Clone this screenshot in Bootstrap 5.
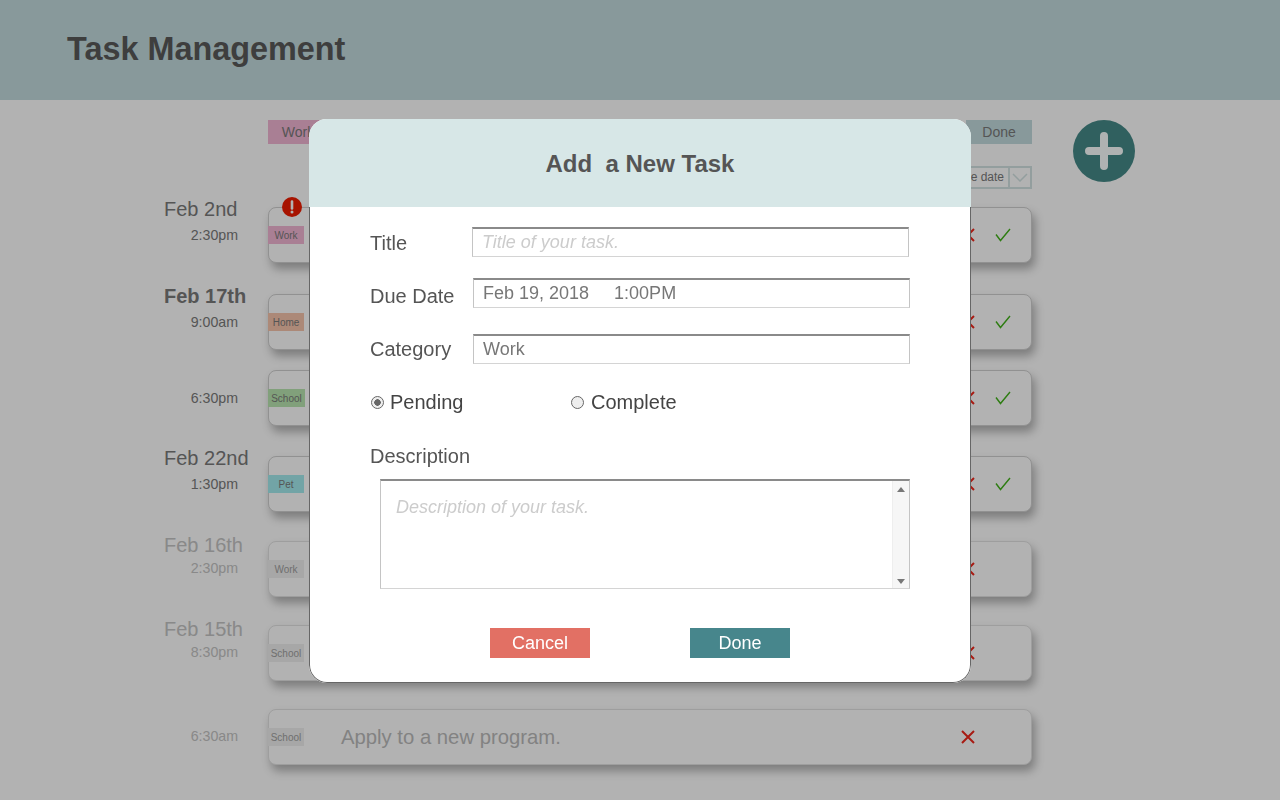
<!DOCTYPE html>
<html lang="en">
  <head>
    <meta charset="UTF-8" />
    <title>Task Management</title>
    <link href="https://cdn.jsdelivr.net/npm/bootstrap@5.3.0/dist/css/bootstrap.min.css" rel="stylesheet" />
    <style>
      body {
        font-family: "Liberation Sans", Arial, sans-serif;
        color: #7a7a7a;
        background-color: #fff;
      }
      .app-header {
        height: 100px;
        padding-left: 67px;
        background-color: #c3dcdf;
      }
      .app-header h1 {
        font-size: 32.4px;
        font-weight: 700;
        color: #595959;
        margin: 0 0 2px;
      }
      .board {
        padding: 20px 0 35px 164px;
      }
      .board-col {
        width: 868px;
      }
      .filter-bar {
        padding-left: 104px;
      }
      .filter-tab {
        width: 66px;
        height: 24px;
        font-size: 14px;
        line-height: 24px;
        text-align: center;
        color: #7a7a7a;
      }
      .filter-tab.cat-work { width: 60px; }
      .sort-box {
        width: 90px;
        height: 23px;
        margin-top: 22px;
        border: 2px solid #d3e3e3;
        font-size: 12px;
        line-height: 19px;
      }
      .sort-arrow {
        width: 22px;
        border-left: 2px solid #d3e3e3;
      }
      .cat-work { background-color: #f3b6d4; }
      .cat-home { background-color: #f7c5ad; }
      .cat-school { background-color: #b9e6b0; }
      .cat-pet { background-color: #a4ebee; }
      .cat-done { background-color: #c3dcdf; }
      .task-row { display: flex; }
      .gap-20 { margin-top: 20px; }
      .gap-28 { margin-top: 28px; }
      .gap-29 { margin-top: 29px; }
      .gap-30 { margin-top: 30px; }
      .gap-31 { margin-top: 31px; }
      .first-row { margin-top: 18px; }
      .when-col {
        width: 104px;
      }
      .task-day {
        font-size: 20px;
        line-height: 24px;
        margin: -10px 0 -14px;
      }
      .task-day.day-low { margin: -8px 0 -16px; }
      .task-day.day-bold { font-weight: 700; }
      .task-time {
        width: 74px;
        margin-top: 18px;
        font-size: 14.2px;
        line-height: 20px;
        text-align: right;
      }
      .task-card {
        position: relative;
        width: 764px;
        height: 56px;
        border: 1px solid #d0d0d0;
        border-radius: 8px;
        background-color: #fff;
        box-shadow: 3px 6px 10px rgba(0, 0, 0, 0.3);
      }
      .task-tag {
        width: 36px;
        height: 18px;
        margin-left: -1px;
        font-size: 10px;
        line-height: 19px;
        text-align: center;
        color: #7a7a7a;
      }
      .task-tag.cat-school { width: 37px; }
      .task-name {
        margin-left: 37px;
        font-size: 20.3px;
        color: #bbb;
      }
      .task-icons {
        width: 50px;
        margin-right: 20px;
      }
      .alert-dot {
        position: absolute;
        left: 13px;
        top: -11px;
        width: 20px;
        height: 20px;
      }
      .add-btn {
        width: 62px;
        height: 62px;
        margin-left: 41px;
        padding: 0;
        border: 0;
        border-radius: 50%;
        background-color: #468a88;
      }
      .is-past .task-day,
      .is-past .task-time { color: #c4c4c4; }
      .is-past .task-time { margin-top: 17px; }
      .is-past .task-card { border-color: #e2e2e2; }
      .is-past .task-tag { background-color: #efefef; color: #a0a0a0; }

      .modal-backdrop.show { opacity: 0.3; }
      .task-dialog {
        max-width: 662px;
        margin: 119px auto 0;
        color: #555;
      }
      .task-dialog .modal-content {
        height: 564px;
        border: 0;
        border-radius: 18px;
        overflow: hidden;
      }
      .task-dialog .modal-header {
        justify-content: center;
        height: 88px;
        padding: 2px 0 0;
        border: 0;
        border-radius: 0;
        background-color: #d7e7e7;
      }
      .task-dialog .modal-title {
        font-size: 24px;
        font-weight: 700;
        color: #555;
      }
      .task-dialog .modal-body {
        padding: 20px 60px 0 60px;
        border: 1px solid #666;
        border-top: 0;
        border-radius: 0 0 18px 18px;
      }
      .field-row {
        display: flex;
        align-items: center;
      }
      .field-label {
        width: 103px;
        font-size: 20px;
        line-height: 24px;
        color: #555;
        margin: 0;
      }
      .row-title .field-label { width: 102px; padding-top: 2px; }
      .row-due .field-label { padding-top: 6px; }
      .field-input.form-control {
        width: 437px;
        height: 30px;
        padding: 0 9px;
        font-size: 18px;
        color: #777;
        border-style: solid;
        border-width: 2px 1px 1px;
        border-color: #8a8a8a #c4c4c4 #d4d4d4;
        border-radius: 0;
      }
      .field-input.form-control::placeholder,
      .desc-input.form-control::placeholder {
        font-style: italic;
        color: #ccc;
      }
      .row-due { margin-top: 21px; }
      .row-category { margin-top: 26px; }
      .row-status { margin-top: 23px; font-size: 20px; color: #444; }
      .status-opt {
        display: flex;
        align-items: center;
        width: 200px;
      }
      .status-opt .form-check-input {
        width: 13px;
        height: 13px;
        margin: 0 6px 0 1px;
        border-color: #666;
        background-color: #eee;
      }
      .status-opt + .status-opt .form-check-input { margin-right: 7px; }
      .status-opt .form-check-input:checked {
        border-color: #666;
        background-color: #eee;
        background-image: radial-gradient(circle, #666 0 3px, transparent 3.5px);
      }
      .row-desc.field-label { margin-top: 27px; margin-bottom: 11px; width: auto; }
      .desc-box {
        display: flex;
        width: 530px;
        height: 110px;
        margin-left: 10px;
        border-style: solid;
        border-width: 2px 1px 1px;
        border-color: #8a8a8a #c4c4c4 #d4d4d4;
      }
      .desc-input.form-control {
        flex: 1;
        padding: 13px 15px;
        border: 0;
        border-radius: 0;
        font-size: 18px;
        resize: none;
      }
      .fake-scroll {
        width: 17px;
        background-color: #f6f6f6;
        border-left: 1px solid #eee;
      }
      .scroll-up,
      .scroll-down {
        border-left: 4px solid transparent;
        border-right: 4px solid transparent;
      }
      .scroll-up { margin-top: 6px; border-bottom: 5px solid #777; }
      .scroll-down { margin-bottom: 4px; border-top: 5px solid #777; }
      .dialog-actions {
        gap: 100px;
        margin-top: 39px;
      }
      .action-btn.btn {
        width: 100px;
        height: 30px;
        padding: 0;
        border: 0;
        border-radius: 0;
        font-size: 18px;
        line-height: 30px;
        color: #fff;
      }
      .btn-cancel.btn { background-color: #e27064; }
      .btn-finish.btn { background-color: #47868c; }
    </style>
  </head>
  <body>
    <svg width="0" height="0" class="d-block">
      <symbol id="icon-x" viewBox="0 0 14 14">
        <path d="M1 1 13 13M13 1 1 13" stroke="#f0281c" stroke-width="2" fill="none" />
      </symbol>
      <symbol id="icon-check" viewBox="0 0 16 14">
        <path d="M1 6.5 5.5 12.5 15 1" stroke="#42b31a" stroke-width="1.4" fill="none" />
      </symbol>
    </svg>

    <header class="app-header d-flex align-items-center">
      <h1>Task Management</h1>
    </header>

    <main class="board d-flex align-items-start">
      <div class="board-col">
        <div class="filter-bar">
          <div class="d-flex justify-content-between">
            <div class="filter-tab cat-work">Work</div>
            <div class="filter-tab cat-home">Home</div>
            <div class="filter-tab cat-school">School</div>
            <div class="filter-tab cat-pet">Pet</div>
            <div class="filter-tab cat-done">Done</div>
          </div>
          <div class="d-flex justify-content-end">
            <div class="sort-box d-flex">
              <div class="flex-grow-1 text-end pe-1">Due date</div>
              <div class="sort-arrow d-flex align-items-center justify-content-center">
                <svg width="16" height="9" viewBox="0 0 16 9"><path d="M1 1 8 8 15 1" stroke="#d3e3e3" stroke-width="1.5" fill="none" /></svg>
              </div>
            </div>
          </div>
        </div>

        <div class="task-row first-row">
          <div class="when-col">
            <div class="task-day">Feb 2nd</div>
            <div class="task-time">2:30pm</div>
          </div>
          <div class="task-card d-flex align-items-center">
            <svg class="alert-dot" viewBox="0 0 20 20">
              <circle cx="10" cy="10" r="10" fill="#f01c00" />
              <path d="M10 4.5v7" stroke="#fff" stroke-width="2.6" stroke-linecap="round" />
              <circle cx="10" cy="15" r="1.5" fill="#fff" />
            </svg>
            <div class="task-tag cat-work">Work</div>
            <div class="task-icons ms-auto d-flex justify-content-between align-items-center">
              <svg width="14" height="14"><use href="#icon-x" /></svg>
              <svg width="16" height="14"><use href="#icon-check" /></svg>
            </div>
          </div>
        </div>

        <div class="task-row gap-31">
          <div class="when-col">
            <div class="task-day day-bold">Feb 17th</div>
            <div class="task-time">9:00am</div>
          </div>
          <div class="task-card d-flex align-items-center">
            <div class="task-tag cat-home">Home</div>
            <div class="task-icons ms-auto d-flex justify-content-between align-items-center">
              <svg width="14" height="14"><use href="#icon-x" /></svg>
              <svg width="16" height="14"><use href="#icon-check" /></svg>
            </div>
          </div>
        </div>

        <div class="task-row gap-20">
          <div class="when-col">
            <div class="task-time">6:30pm</div>
          </div>
          <div class="task-card d-flex align-items-center">
            <div class="task-tag cat-school">School</div>
            <div class="task-icons ms-auto d-flex justify-content-between align-items-center">
              <svg width="14" height="14"><use href="#icon-x" /></svg>
              <svg width="16" height="14"><use href="#icon-check" /></svg>
            </div>
          </div>
        </div>

        <div class="task-row gap-30">
          <div class="when-col">
            <div class="task-day">Feb 22nd</div>
            <div class="task-time">1:30pm</div>
          </div>
          <div class="task-card d-flex align-items-center">
            <div class="task-tag cat-pet">Pet</div>
            <div class="task-icons ms-auto d-flex justify-content-between align-items-center">
              <svg width="14" height="14"><use href="#icon-x" /></svg>
              <svg width="16" height="14"><use href="#icon-check" /></svg>
            </div>
          </div>
        </div>

        <div class="task-row gap-29 is-past">
          <div class="when-col">
            <div class="task-day day-low">Feb 16th</div>
            <div class="task-time">2:30pm</div>
          </div>
          <div class="task-card d-flex align-items-center">
            <div class="task-tag">Work</div>
            <div class="task-icons ms-auto d-flex align-items-center">
              <svg width="14" height="14"><use href="#icon-x" /></svg>
            </div>
          </div>
        </div>

        <div class="task-row gap-28 is-past">
          <div class="when-col">
            <div class="task-day day-low">Feb 15th</div>
            <div class="task-time">8:30pm</div>
          </div>
          <div class="task-card d-flex align-items-center">
            <div class="task-tag">School</div>
            <div class="task-icons ms-auto d-flex align-items-center">
              <svg width="14" height="14"><use href="#icon-x" /></svg>
            </div>
          </div>
        </div>

        <div class="task-row gap-28 is-past">
          <div class="when-col">
            <div class="task-time">6:30am</div>
          </div>
          <div class="task-card d-flex align-items-center">
            <div class="task-tag">School</div>
            <div class="task-name">Apply to a new program.</div>
            <div class="task-icons ms-auto d-flex align-items-center">
              <svg width="14" height="14"><use href="#icon-x" /></svg>
            </div>
          </div>
        </div>
      </div>

      <button type="button" class="add-btn d-flex align-items-center justify-content-center" aria-label="Add task">
        <svg width="38" height="38" viewBox="0 0 38 38"><path d="M19 4v30M4 19h30" stroke="#fbffff" stroke-width="8" stroke-linecap="round" /></svg>
      </button>
    </main>

    <div class="modal-backdrop show"></div>
    <div class="modal d-block" tabindex="-1">
      <div class="modal-dialog task-dialog">
        <div class="modal-content">
          <div class="modal-header">
            <h5 class="modal-title">Add &nbsp;a New Task</h5>
          </div>
          <div class="modal-body">
            <form>
              <div class="field-row row-title">
                <label class="field-label" for="taskTitle">Title</label>
                <input class="form-control field-input" id="taskTitle" type="text" placeholder="Title of your task." />
              </div>
              <div class="field-row row-due">
                <label class="field-label" for="taskDue">Due Date</label>
                <input class="form-control field-input" id="taskDue" type="text" value="Feb 19, 2018     1:00PM" />
              </div>
              <div class="field-row row-category">
                <label class="field-label" for="taskCategory">Category</label>
                <input class="form-control field-input" id="taskCategory" type="text" value="Work" />
              </div>
              <div class="field-row row-status">
                <label class="status-opt"><input class="form-check-input" type="radio" name="status" checked />Pending</label>
                <label class="status-opt"><input class="form-check-input" type="radio" name="status" />Complete</label>
              </div>
              <div class="row-desc field-label">Description</div>
              <div class="desc-box">
                <textarea class="form-control desc-input" placeholder="Description of your task."></textarea>
                <div class="fake-scroll d-flex flex-column justify-content-between align-items-center">
                  <div class="scroll-up"></div>
                  <div class="scroll-down"></div>
                </div>
              </div>
              <div class="dialog-actions d-flex justify-content-center">
                <button type="button" class="btn action-btn btn-cancel">Cancel</button>
                <button type="button" class="btn action-btn btn-finish">Done</button>
              </div>
            </form>
          </div>
        </div>
      </div>
    </div>

    <script src="https://cdn.jsdelivr.net/npm/bootstrap@5.3.0/dist/js/bootstrap.bundle.min.js"></script>
  </body>
</html>
